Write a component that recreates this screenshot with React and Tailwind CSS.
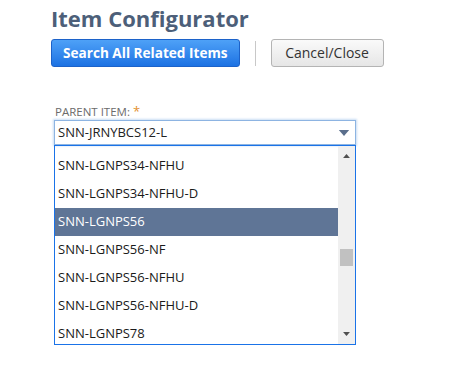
const rows = [
  'SNN-LGNPS34-NFHU',
  'SNN-LGNPS34-NFHU-D',
  'SNN-LGNPS56',
  'SNN-LGNPS56-NF',
  'SNN-LGNPS56-NFHU',
  'SNN-LGNPS56-NFHU-D',
  'SNN-LGNPS78',
]

function Caret({ className }) {
  return (
    <svg className={className} viewBox="0 0 12 7" fill="currentColor">
      <path d="M0 0h12L6 7z" />
    </svg>
  )
}

export default function App() {
  return (
    <div
      className="w-[451px] h-[375px] bg-white pl-[51px] pt-[3px] overflow-hidden"
      style={{ fontFamily: '"Open Sans", "Liberation Sans", sans-serif' }}
    >
      <h1 className="text-[22px] font-bold leading-[30px] text-[#4d5f79]">Item Configurator</h1>

      <div className="flex items-center mt-[6px]">
        <button className="h-[28px] px-[11px] rounded-[3px] border border-[#1c62c9] bg-gradient-to-b from-[#4ea1f7] to-[#1c72e3] text-white text-[13.6px] font-bold leading-none">
          Search All Related Items
        </button>
        <div className="w-px h-[25px] bg-[#c8c8c8] mx-[15px]"></div>
        <button className="h-[28px] w-[113px] rounded-[3px] border border-[#b4b4b4] bg-gradient-to-b from-[#fafafa] to-[#e6e6e6] text-[#333] text-[14px] leading-none">
          Cancel/Close
        </button>
      </div>

      <div className="mt-[36px] ml-[4px] text-[11.5px] leading-[16px] text-[#6b6b6b] uppercase">
        Parent Item: <span className="text-[#e3912f] text-[13px]">*</span>
      </div>

      <div className="ml-[3px] w-[302px]">
        <div className="h-[25px] border border-[#8db4e2] shadow-[0_0_2px_1px_#c9ddf4] flex items-center justify-between pl-[3px] pr-[5px] text-[13px] text-[#222]">
          <span>SNN-JRNYBCS12-L</span>
          <Caret className="w-[12px] h-[6px] text-[#5a6e8c]" />
        </div>

        <div className="h-[200px] border border-[#1a73e8] flex overflow-hidden">
          <div className="flex-1 overflow-hidden pt-[6px]">
            {rows.map((r) => (
              <div
                key={r}
                className={
                  r === 'SNN-LGNPS56'
                    ? 'h-[28px] flex items-center pl-[3px] text-[13px] bg-[#5f7596] text-white'
                    : 'h-[28px] flex items-center pl-[3px] text-[13px] text-[#1a1a1a]'
                }
              >
                {r}
              </div>
            ))}
          </div>
          <div className="w-[17px] bg-[#f0f0f0] flex flex-col items-center">
            <Caret className="w-[7px] h-[4px] text-[#505050] rotate-180 mt-[8px]" />
            <div className="w-[13px] h-[17px] bg-[#c1c1c1] mt-[91px]"></div>
            <Caret className="w-[7px] h-[4px] text-[#505050] mt-auto mb-[8px]" />
          </div>
        </div>
      </div>
    </div>
  )
}
